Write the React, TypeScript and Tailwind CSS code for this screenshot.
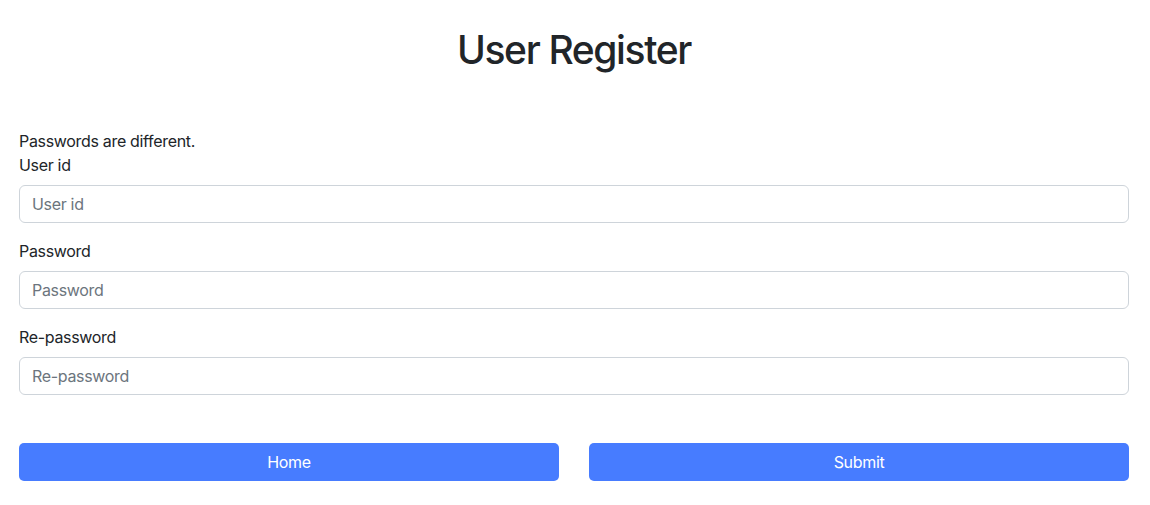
export default function App() {
  return (
    <div
      className="min-h-[505px] bg-white text-[#212529]"
      style={{ fontFamily: "Inter, 'Liberation Sans', sans-serif" }}
    >
      <div className="w-[1110px] ml-[19px] pt-[26px]">
        <h1 className="text-center text-[39px] leading-[48px] font-medium tracking-[-0.035em]">
          User Register
        </h1>

        <form
          className="mt-[55px] text-base leading-6 tracking-[-0.02em]"
          onSubmit={(e) => e.preventDefault()}
        >
          <div>Passwords are different.</div>

          <div className="mb-4">
            <label className="block mb-2">User id</label>
            <input
              className="block w-full h-[38px] px-3 border border-[#ced4da] rounded-[6px] placeholder:text-[#6c757d] outline-none"
              placeholder="User id"
            />
          </div>
          <div className="mb-4">
            <label className="block mb-2">Password</label>
            <input
              type="password"
              className="block w-full h-[38px] px-3 border border-[#ced4da] rounded-[6px] placeholder:text-[#6c757d] outline-none"
              placeholder="Password"
            />
          </div>
          <div>
            <label className="block mb-2">Re-password</label>
            <input
              type="password"
              className="block w-full h-[38px] px-3 border border-[#ced4da] rounded-[6px] placeholder:text-[#6c757d] outline-none"
              placeholder="Re-password"
            />
          </div>

          <div className="mt-12 grid grid-cols-2 gap-[30px]">
            <button type="button" className="h-[38px] rounded-[5px] bg-[#477cff] text-white">
              Home
            </button>
            <button type="submit" className="h-[38px] rounded-[5px] bg-[#477cff] text-white">
              Submit
            </button>
          </div>
        </form>
      </div>
    </div>
  );
}
